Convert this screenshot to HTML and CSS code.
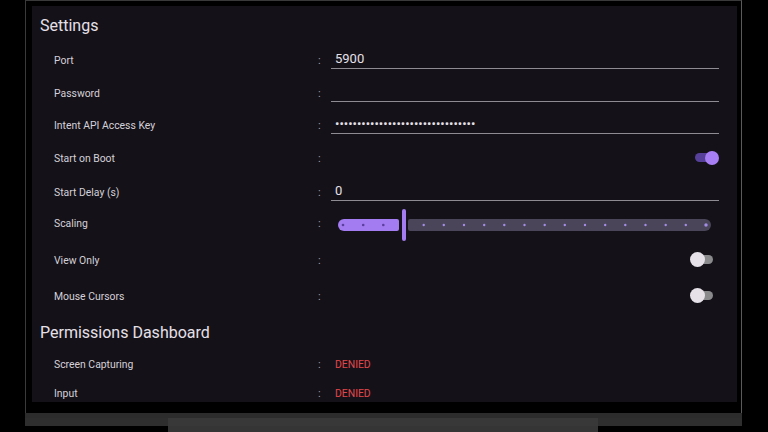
FILE: index.html
```html
<!DOCTYPE html>
<html lang="en">
<head>
<meta charset="utf-8">
<title>Settings</title>
<link rel="stylesheet" href="styles.css">
</head>
<body>
<div class="tv">
  <div class="bezel">
    <main class="screen">
      <h2 class="section-title">Settings</h2>

      <div class="row h34">
        <span class="label">Port</span><span class="colon">:</span>
        <div class="value"><div class="field">5900</div></div>
      </div>
      <div class="row h32">
        <span class="label">Password</span><span class="colon">:</span>
        <div class="value"><div class="field"></div></div>
      </div>
      <div class="row h33">
        <span class="label">Intent API Access Key</span><span class="colon">:</span>
        <div class="value"><div class="field secret">••••••••••••••••••••••••••••••••</div></div>
      </div>
      <div class="row h33">
        <span class="label">Start on Boot</span><span class="colon">:</span>
        <div class="value end"><div class="switch on"><span class="thumb"></span></div></div>
      </div>
      <div class="row h34">
        <span class="label">Start Delay (s)</span><span class="colon">:</span>
        <div class="value"><div class="field">0</div></div>
      </div>
      <div class="row h33">
        <span class="label up">Scaling</span><span class="colon up">:</span>
        <div class="value">
          <svg class="slider" width="388" height="32" viewBox="0 0 388 32">
            <path class="trk-on" d="M13,10 H66 a2,2 0 0 1 2,2 V20 a2,2 0 0 1 -2,2 H13 a6,6 0 0 1 0,-12 Z"/>
            <path class="trk-off" d="M79,10 H374 a6,6 0 0 1 0,12 H79 a2,2 0 0 1 -2,-2 V12 a2,2 0 0 1 2,-2 Z"/>
            <rect class="handle" x="71" y="0" width="4" height="32" rx="2"/>
            <g class="dot-on">
              <circle cx="12" cy="16" r="1.3"/><circle cx="32.2" cy="16" r="1.3"/><circle cx="52.3" cy="16" r="1.3"/>
            </g>
            <g class="dot-off">
              <circle cx="92.7" cy="16" r="1.2"/><circle cx="112.8" cy="16" r="1.2"/><circle cx="133" cy="16" r="1.2"/>
              <circle cx="153.2" cy="16" r="1.2"/><circle cx="173.3" cy="16" r="1.2"/><circle cx="193.5" cy="16" r="1.2"/>
              <circle cx="213.7" cy="16" r="1.2"/><circle cx="233.8" cy="16" r="1.2"/><circle cx="254" cy="16" r="1.2"/>
              <circle cx="274.2" cy="16" r="1.2"/><circle cx="294.3" cy="16" r="1.2"/><circle cx="314.5" cy="16" r="1.2"/>
              <circle cx="334.7" cy="16" r="1.2"/><circle cx="354.8" cy="16" r="1.2"/><circle cx="375" cy="16" r="1.7"/>
            </g>
          </svg>
        </div>
      </div>
      <div class="row h37">
        <span class="label">View Only</span><span class="colon">:</span>
        <div class="value end"><div class="switch"><span class="thumb"></span></div></div>
      </div>
      <div class="row h35">
        <span class="label">Mouse Cursors</span><span class="colon">:</span>
        <div class="value end"><div class="switch"><span class="thumb"></span></div></div>
      </div>

      <h2 class="section-title">Permissions Dashboard</h2>

      <div class="row h29">
        <span class="label">Screen Capturing</span><span class="colon">:</span>
        <div class="value"><span class="status denied">DENIED</span></div>
      </div>
      <div class="row h29">
        <span class="label">Input</span><span class="colon">:</span>
        <div class="value"><span class="status denied">DENIED</span></div>
      </div>
    </main>
  </div>
  <div class="band"></div>
  <div class="base-row">
    <div class="band-side left"></div>
    <div class="stand"></div>
    <div class="band-side right"></div>
  </div>
  <div class="stand-foot"></div>
</div>
</body>
</html>
```

FILE: styles.css
```css
html, body {
  margin: 0;
  padding: 0;
  background: #000;
  width: 768px;
  height: 432px;
  overflow: hidden;
  font-family: Roboto, "Noto Sans", sans-serif;
}

.tv {
  width: 717px;
  margin-left: 25px;
}

.bezel {
  background: #000;
  border: 1px solid #3a3a3a;
  border-bottom: none;
  border-right-color: #5a5a5a;
  padding: 5px 4px 11px 6px;
}

.screen {
  width: 705px;
  height: 396px;
  background: #141218;
  overflow: hidden;
  color: #d4d0d9;
}

.section-title {
  margin: 0;
  height: 34px;
  padding: 2px 0 0 8px;
  line-height: 36px;
  font-size: 16px;
  font-weight: 400;
  color: #e6e0e9;
}

.row {
  display: grid;
  grid-template-columns: 263px 14px 388px;
  align-items: center;
  padding-left: 22px;
  font-size: 10.4px;
}

.h29 { height: 29px; }
.h32 { height: 32px; }
.h33 { height: 33px; }
.h34 { height: 34px; }
.h35 { height: 35px; }
.h37 { height: 37px; }

.label {
  padding-top: 2px;
  color: #d4d0d9;
}
.label.up, .colon.up {
  padding-top: 0;
  padding-bottom: 3px;
}

.colon {
  padding-top: 2px;
  padding-left: 1px;
  font-size: 11px;
  color: #a29ea8;
}

.value {
  display: flex;
  align-items: center;
}
.value.end {
  justify-content: flex-end;
}

.field {
  box-sizing: border-box;
  width: 388px;
  height: 19px;
  line-height: 18px;
  padding-left: 4px;
  font-size: 13px;
  color: #e6e0e9;
  border-bottom: 1px solid #8e8b93;
}
.field.secret {
  font-size: 13px;
  letter-spacing: 0;
}

.slider {
  display: block;
}
.trk-on { fill: #a27cf0; }
.trk-off { fill: #4a4558; }
.handle { fill: #a27cf0; }
.dot-on circle { fill: #5a3f9e; }
.dot-off circle { fill: #a48de6; }

.switch {
  position: relative;
  width: 29px;
  height: 15px;
}
.switch::before {
  content: "";
  position: absolute;
  left: 5px;
  top: 3px;
  width: 18px;
  height: 9px;
  border-radius: 5px;
  background: #8a8a8c;
}
.switch .thumb {
  position: absolute;
  left: 0;
  top: 0;
  width: 15px;
  height: 15px;
  border-radius: 50%;
  background: #e6e1e8;
}
.switch.on::before {
  background: #56409a;
}
.switch.on .thumb {
  left: auto;
  right: 0;
  top: 0.5px;
  width: 14px;
  height: 14px;
  background: #a87ef4;
}

.status {
  padding-left: 4px;
  padding-top: 2px;
  font-size: 10.4px;
}
.denied {
  color: #e2474b;
}

.band {
  height: 5px;
  background: #2c2c2c;
}
.base-row {
  display: flex;
  height: 8px;
}
.band-side {
  background: #2e2e2e;
}
.band-side.left {
  width: 143px;
}
.band-side.right {
  flex: 1;
}
.stand {
  width: 430px;
  background: #383838;
}
.stand-foot {
  margin-left: 143px;
  width: 430px;
  height: 6px;
  background: #353535;
}
```
